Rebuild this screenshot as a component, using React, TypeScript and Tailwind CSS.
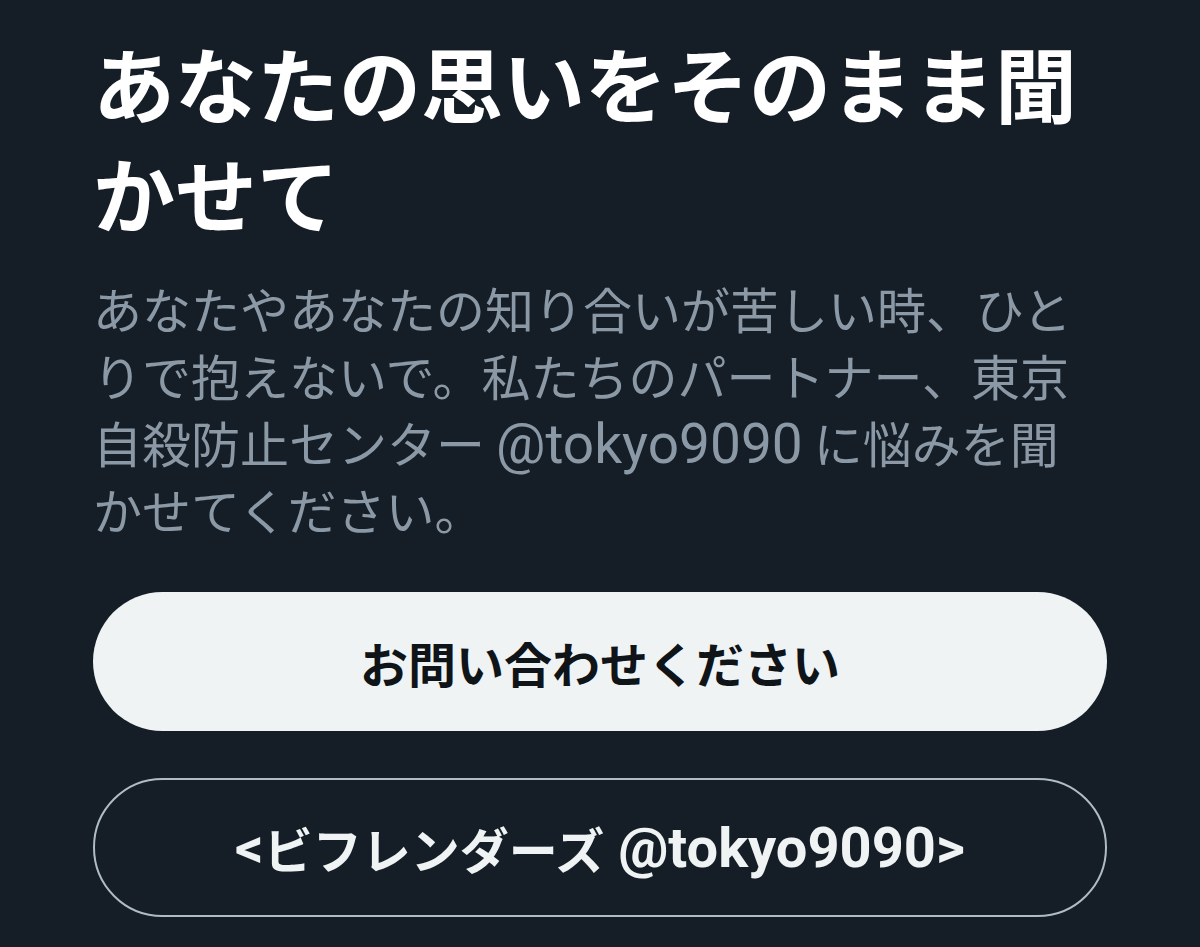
export default function App() {
  const latin = { fontFamily: 'Roboto, "Noto Sans", sans-serif' };
  return (
    <div
      className="w-[1200px] h-[947px] bg-[#151e27] overflow-hidden"
      style={{ fontFamily: '"Noto Sans CJK JP", "Noto Sans", sans-serif' }}
    >
      <div className="pl-[93px] pr-[93px] pt-[27px] flex flex-col">
        <h1 className="text-[82px] leading-[110px] font-bold text-white">
          あなたの思いをそのまま聞かせて
        </h1>
        <p className="mt-[27px] text-[49px] leading-[67px] text-[#8b98a5]">
          あなたやあなたの知り合いが苦しい時、ひとりで抱えないで。私たちのパートナー、東京自殺防止センター{' '}
          <span className="text-[55px] leading-[1]" style={latin}>
            @tokyo9090
          </span>{' '}
          に悩みを聞かせてください。
        </p>
        <button className="mt-[50px] h-[139px] w-full rounded-full bg-[#eff3f4] text-[#0f1419] text-[48px] font-bold flex items-center justify-center">
          お問い合わせください
        </button>
        <button className="mt-[47px] h-[139px] w-full rounded-full border-2 border-[#b0bcc4] text-[#eff3f4] text-[49px] font-bold flex items-center justify-center">
          <span className="text-[56px] leading-[1]" style={latin}>
            &lt;
          </span>
          <span>ビフレンダーズ</span>
          <span className="text-[56px] leading-[1]" style={latin}>
            &nbsp;@tokyo9090&gt;
          </span>
        </button>
      </div>
    </div>
  );
}
